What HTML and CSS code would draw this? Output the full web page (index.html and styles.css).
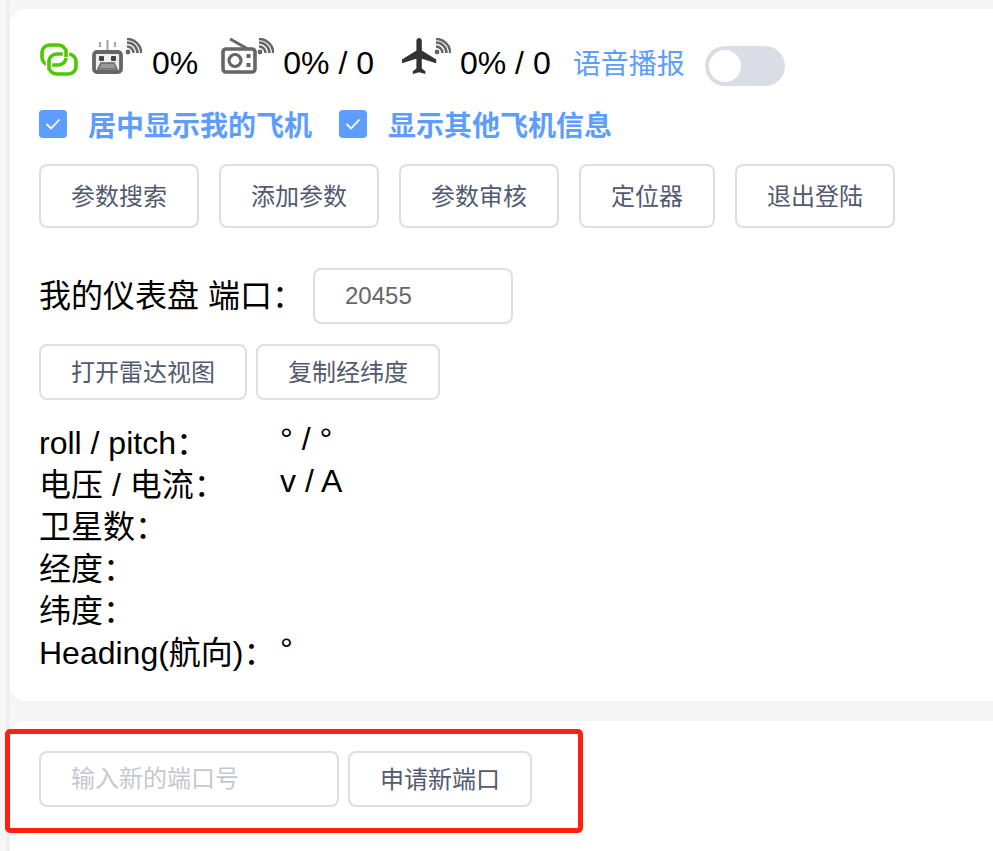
FILE: index.html
```html
<!DOCTYPE html>
<html lang="zh-CN">
<head>
    <meta charset="UTF-8" />
    <title>我的仪表盘</title>
    <link rel="stylesheet" href="styles.css">
</head>
<body>
    <svg class="defs" width="0" height="0">
        <symbol id="wifi" viewBox="0 0 17 17">
            <circle cx="3" cy="14" r="2.4" fill="#666"/>
            <path d="M2 8.5a6.5 6.5 0 0 1 6.5 6.5M2 4.5a10.500 10.500 0 0 1 10.500 10.500M2 .9a14.200 14.200 0 0 1 14.200 14.200" fill="none" stroke="#666" stroke-width="2.500"/>
        </symbol>
    </svg>
    <div class="page">
        <section class="card card-main">
            <div class="status">
                <svg class="icon-link" width="38" height="33" viewBox="0 0 38 33">
                    <g fill="none" stroke-width="3.600">
                        <rect x="2" y="2" width="24" height="20" rx="7.500" stroke="#4cc800"/>
                        <rect x="9" y="11" width="27" height="20" rx="7.500" stroke="#4cc800"/>
                        <path d="M26 7v8" stroke="#fff" stroke-width="6.400"/>
                        <path d="M26 6v8" stroke="#4cc800"/>
                        <path d="M9 18v8" stroke="#fff" stroke-width="6.400"/>
                        <path d="M9 17v10" stroke="#4cc800"/>
                    </g>
                </svg>
                <span class="group group-robot">
                    <svg width="31" height="34" viewBox="0 0 31 34">
                        <path d="M8 2v5M15.500 0v11M23 2v5" stroke="#aaa" stroke-width="2.200"/>
                        <rect x="2" y="12" width="27" height="20" rx="3" fill="#eee" stroke="#666" stroke-width="3.800"/>
                        <rect x="7" y="16" width="5" height="5" rx="1" fill="#444"/>
                        <rect x="19" y="16" width="5" height="5" rx="1" fill="#444"/>
                        <path d="M9 23h13l3 6H6z" fill="#999" stroke="#666" stroke-width="1.500"/>
                    </svg>
                    <svg class="wifi" width="17" height="17"><use href="#wifi"/></svg>
                    <span class="num num-first">0%</span>
                </span>
                <span class="group group-radio">
                    <svg width="36" height="36" viewBox="0 0 36 36">
                        <path d="M9 1l18 10" stroke="#666" stroke-width="3"/>
                        <rect x="2" y="11" width="32" height="23" rx="3" fill="none" stroke="#666" stroke-width="3.600"/>
                        <circle cx="14" cy="22.500" r="6" fill="none" stroke="#666" stroke-width="3.200"/>
                        <rect x="25.500" y="16" width="4" height="4" fill="#666"/>
                        <rect x="25.500" y="25" width="4" height="4" fill="#666"/>
                    </svg>
                    <svg class="wifi" width="17" height="17"><use href="#wifi"/></svg>
                    <span class="num">0% / 0</span>
                </span>
                <span class="group group-plane">
                    <svg width="36" height="36" viewBox="2 2 20 20">
                        <path d="M21 16v-2l-8-5V3.500c0-.83-.67-1.500-1.500-1.500S10 2.670 10 3.500V9l-8 5v2l8-2.500V19l-2 1.500V22l3.500-1 3.500 1v-1.500L13 19v-5.500l8 2.500z" fill="#333"/>
                    </svg>
                    <svg class="wifi wifi-plane" width="17" height="17"><use href="#wifi"/></svg>
                    <span class="num">0% / 0</span>
                </span>
                <span class="voice">语音播报</span>
                <span class="switch"><span class="knob"></span></span>
            </div>

            <div class="checks">
                <label class="check">
                    <span class="box"><svg width="16" height="12" viewBox="0 0 16 12"><path d="M1.500 6l4.500 4.500 8.500-9" fill="none" stroke="#fff" stroke-width="1.800"/></svg></span>
                    <span>居中显示我的飞机</span>
                </label>
                <label class="check">
                    <span class="box"><svg width="16" height="12" viewBox="0 0 16 12"><path d="M1.500 6l4.500 4.500 8.500-9" fill="none" stroke="#fff" stroke-width="1.800"/></svg></span>
                    <span>显示其他飞机信息</span>
                </label>
            </div>

            <div class="actions">
                <button class="btn btn-lg">参数搜索</button>
                <button class="btn btn-lg">添加参数</button>
                <button class="btn btn-lg">参数审核</button>
                <button class="btn btn-lg">定位器</button>
                <button class="btn btn-lg">退出登陆</button>
            </div>

            <div class="port-row">
                <span class="port-label">我的仪表盘 端口：</span>
                <input class="input input-port" value="20455" />
            </div>

            <div class="tools">
                <button class="btn">打开雷达视图</button>
                <button class="btn">复制经纬度</button>
            </div>

            <div class="info">
                <div class="label">roll / pitch：</div>
                <div class="value">° / °</div>
                <div class="label">电压 / 电流：</div>
                <div class="value">v / A</div>
                <div class="label">卫星数：</div>
                <div class="value"></div>
                <div class="label">经度：</div>
                <div class="value"></div>
                <div class="label">纬度：</div>
                <div class="value"></div>
                <div class="label">Heading(航向)：</div>
                <div class="value">°</div>
            </div>
        </section>

        <section class="card card-apply">
            <div class="apply-row">
                <input class="input input-new" placeholder="输入新的端口号" />
                <button class="btn">申请新端口</button>
            </div>
            <div class="highlight"></div>
        </section>
    </div>
</body>
</html>
```

FILE: styles.css
```css
* {
    box-sizing: border-box;
}
html, body {
    height: 100%;
}
body {
    margin: 0;
    background: #f5f5f5;
    font-family: "Liberation Sans", "Noto Sans CJK SC", sans-serif;
    color: #111;
    overflow: hidden;
}
.defs {
    position: absolute;
}
.page {
    margin-left: 7px;
    height: 851px;
    padding: 9px 0 0 1px;
    border-left: 2px solid #ebebeb;
    display: flex;
    flex-direction: column;
    gap: 20px;
}
.card {
    background: #fff;
    border-radius: 16px 0 0 16px;
    margin-right: -20px;
}
.card-main {
    height: 692px;
    padding: 29px 0 0 29px;
}
.card-apply {
    flex: 1;
    position: relative;
    padding: 30px 0 0 29px;
    border-radius: 16px 0 0 0;
}

.status {
    display: flex;
    align-items: flex-start;
    height: 44px;
    font-size: 32px;
    color: #000;
}
.icon-link {
    margin: 5px 0 0 1px;
}
.group {
    display: flex;
    align-items: flex-start;
}
.group-robot {
    margin: 2px 0 0 14px;
}
.group-radio {
    margin: 0 0 0 23px;
}
.group-plane {
    margin: 0 0 0 28px;
}
.wifi {
    margin: -2px 0 0 2px;
}
.group-radio .wifi {
    margin: 0;
}
.wifi-plane {
    margin: 0 0 0 -4px;
}
.num {
    margin: 7px 0 0 9px;
    line-height: 37px;
    white-space: nowrap;
}
.group-robot .num {
    margin: 5px 0 0 10px;
}
.voice {
    margin: 7px 0 0 22px;
    font-size: 28px;
    line-height: 40px;
    color: #5c9dff;
}
.switch {
    display: block;
    width: 80px;
    height: 40px;
    margin: 8px 0 0 20px;
    padding: 4px;
    border-radius: 20px;
    background: #dadde5;
}
.knob {
    display: block;
    width: 32px;
    height: 32px;
    border-radius: 50%;
    background: #fff;
}

.checks {
    display: flex;
    gap: 27px;
    margin-top: 28px;
}
.check {
    display: flex;
    align-items: center;
    gap: 21px;
    height: 28px;
    font-size: 28px;
    font-weight: 700;
    color: #5c9dff;
}
.box {
    display: flex;
    align-items: center;
    justify-content: center;
    width: 28px;
    height: 28px;
    border-radius: 4px;
    background: #5c9dff;
}

.btn {
    height: 56px;
    padding: 0 30px 3px;
    border: 2px solid #dcdee2;
    border-radius: 8px;
    background: #fff;
    color: #515a6e;
    font-family: inherit;
    font-size: 24px;
}
.actions {
    display: flex;
    gap: 20px;
    margin-top: 26px;
}
.btn-lg {
    height: 64px;
}
.port-row {
    display: flex;
    align-items: center;
    margin-top: 40px;
    font-size: 32px;
    color: #000;
}
.port-label {
    width: 274px;
    margin-bottom: 6px;
    white-space: nowrap;
}
.input {
    height: 56px;
    padding: 0 30px;
    border: 2px solid #dcdee2;
    border-radius: 8px;
    background: #fff;
    color: #666;
    font-family: inherit;
    font-size: 24px;
    outline: none;
}
.input::placeholder {
    color: #c5c8ce;
}
.input-port {
    width: 200px;
}
.tools {
    display: flex;
    gap: 9px;
    margin-top: 20px;
}
.info {
    display: grid;
    grid-template-columns: 241px 1fr;
    grid-auto-rows: 42px;
    margin-top: 22px;
    font-size: 32px;
    line-height: 42px;
    color: #000;
}
.label {
    white-space: nowrap;
}
.value {
    margin-top: -4px;
}

.apply-row {
    display: flex;
    gap: 9px;
}
.input-new {
    width: 300px;
}
.highlight {
    position: absolute;
    left: -5px;
    top: 8px;
    width: 578px;
    height: 104px;
    border: 5px solid #ff2010;
    border-radius: 5px;
}
```
